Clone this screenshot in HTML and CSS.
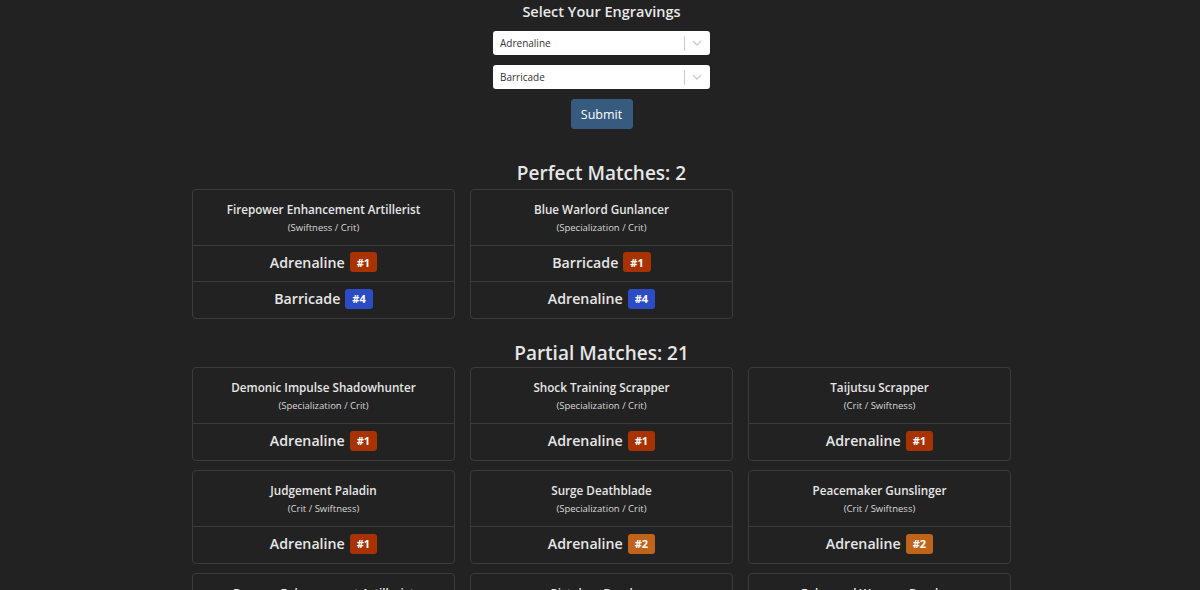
FILE: index.html
```html
<!DOCTYPE html>
<html lang="en">
<head>
<meta charset="utf-8">
<title>Engravings</title>
<link rel="stylesheet" href="styles.css">
</head>
<body>
<div class="page">
  <form class="picker">
    <h1 class="title">Select Your Engravings</h1>
    <div class="select">
      <span class="select-value">Adrenaline</span>
      <span class="select-sep"></span>
      <svg class="select-arrow" width="10" height="6" viewBox="0 0 10 6"><path d="M1 1l4 4 4-4" fill="none" stroke="#ccc" stroke-width="1.3"/></svg>
    </div>
    <div class="select">
      <span class="select-value">Barricade</span>
      <span class="select-sep"></span>
      <svg class="select-arrow" width="10" height="6" viewBox="0 0 10 6"><path d="M1 1l4 4 4-4" fill="none" stroke="#ccc" stroke-width="1.3"/></svg>
    </div>
    <button class="btn" type="button">Submit</button>
  </form>

  <h2 class="section-title first">Perfect Matches: 2</h2>
  <div class="grid">
    <div class="card">
      <div class="card-head"><div class="card-name">Firepower Enhancement Artillerist</div><div class="card-stats">(Swiftness / Crit)</div></div>
      <div class="card-row">Adrenaline <span class="badge b1">#1</span></div>
      <div class="card-row">Barricade <span class="badge b4">#4</span></div>
    </div>
    <div class="card">
      <div class="card-head"><div class="card-name">Blue Warlord Gunlancer</div><div class="card-stats">(Specialization / Crit)</div></div>
      <div class="card-row">Barricade <span class="badge b1">#1</span></div>
      <div class="card-row">Adrenaline <span class="badge b4">#4</span></div>
    </div>
  </div>

  <h2 class="section-title second">Partial Matches: 21</h2>
  <div class="grid partial">
    <div class="card">
      <div class="card-head"><div class="card-name">Demonic Impulse Shadowhunter</div><div class="card-stats">(Specialization / Crit)</div></div>
      <div class="card-row">Adrenaline <span class="badge b1">#1</span></div>
    </div>
    <div class="card">
      <div class="card-head"><div class="card-name">Shock Training Scrapper</div><div class="card-stats">(Specialization / Crit)</div></div>
      <div class="card-row">Adrenaline <span class="badge b1">#1</span></div>
    </div>
    <div class="card">
      <div class="card-head"><div class="card-name">Taijutsu Scrapper</div><div class="card-stats">(Crit / Swiftness)</div></div>
      <div class="card-row">Adrenaline <span class="badge b1">#1</span></div>
    </div>
    <div class="card">
      <div class="card-head"><div class="card-name">Judgement Paladin</div><div class="card-stats">(Crit / Swiftness)</div></div>
      <div class="card-row">Adrenaline <span class="badge b1">#1</span></div>
    </div>
    <div class="card">
      <div class="card-head"><div class="card-name">Surge Deathblade</div><div class="card-stats">(Specialization / Crit)</div></div>
      <div class="card-row">Adrenaline <span class="badge b2">#2</span></div>
    </div>
    <div class="card">
      <div class="card-head"><div class="card-name">Peacemaker Gunslinger</div><div class="card-stats">(Crit / Swiftness)</div></div>
      <div class="card-row">Adrenaline <span class="badge b2">#2</span></div>
    </div>
    <div class="card">
      <div class="card-head"><div class="card-name">Barrage Enhancement Artillerist</div><div class="card-stats">(Crit / Specialization)</div></div>
      <div class="card-row">Adrenaline <span class="badge b2">#2</span></div>
    </div>
    <div class="card">
      <div class="card-head"><div class="card-name">Pistoleer Deadeye</div><div class="card-stats">(Specialization / Crit)</div></div>
      <div class="card-row">Adrenaline <span class="badge b2">#2</span></div>
    </div>
    <div class="card">
      <div class="card-head"><div class="card-name">Enhanced Weapon Deadeye</div><div class="card-stats">(Crit / Specialization)</div></div>
      <div class="card-row">Adrenaline <span class="badge b2">#2</span></div>
    </div>
  </div>
</div>
</body>
</html>
```

FILE: styles.css
```css
* { box-sizing: border-box; }
html, body { margin: 0; padding: 0; background: #222222; }
body {
  font-family: "Open Sans", "Noto Sans", "Liberation Sans", sans-serif;
  color: #e6e6e6;
}
.page {
  padding: 2px 0 40px;
  display: flex;
  flex-direction: column;
  align-items: center;
}
.picker {
  display: flex;
  flex-direction: column;
  align-items: center;
  margin-left: 3px;
}
.title {
  margin: 0;
  font-size: 14.5px;
  line-height: 20px;
  font-weight: 600;
  color: #e8e8e8;
}
.select {
  width: 217px;
  height: 24px;
  background: #fff;
  border-radius: 3px;
  display: flex;
  align-items: center;
  margin-top: 9px;
  padding-left: 7px;
}
.select + .select { margin-top: 10px; }
.select-value {
  flex: 1;
  font-size: 10px;
  color: #333;
}
.select-sep {
  width: 1px;
  height: 15px;
  background: #ccc;
}
.select-arrow {
  margin: 0 8px 0 7px;
}
.btn {
  margin-top: 10px;
  height: 30px;
  width: 62px;
  background: #375a7f;
  border: 1px solid #375a7f;
  border-radius: 3px;
  color: #fff;
  font-family: inherit;
  font-size: 12.5px;
  padding: 0;
}
.section-title {
  font-size: 19px;
  line-height: 24px;
  font-weight: 600;
  color: #e6e6e6;
  margin: 32px 0 4px 3px;
}
.section-title.second { margin-top: 22px; margin-bottom: 2px; }
.grid {
  display: grid;
  grid-template-columns: repeat(3, 263px);
  column-gap: 15px;
  row-gap: 9px;
  margin-left: 3px;
}
.card {
  border: 1px solid #3b3b3b;
  border-radius: 4px;
  background: #222;
}
.card-head {
  padding: 10px 8px 10px;
  text-align: center;
  border-bottom: 1px solid #3b3b3b;
}
.card-name {
  font-size: 11.7px;
  line-height: 18px;
  font-weight: 600;
  color: #e6e6e6;
}
.card-stats {
  margin-top: 3px;
  font-size: 9.5px;
  line-height: 14px;
  color: #d8d8d8;
}
.card-row {
  height: 36px;
  padding-bottom: 3px;
  display: flex;
  align-items: center;
  justify-content: center;
  font-size: 14.2px;
  font-weight: 600;
  color: #e6e6e6;
  border-bottom: 1px solid #3b3b3b;
}
.card-row:last-child { border-bottom: 0; }
.badge {
  display: inline-flex;
  align-items: center;
  justify-content: center;
  margin-left: 5px;
  height: 20px;
  padding: 0 7px;
  border-radius: 3px;
  font-size: 11px;
  font-weight: 700;
  color: #fff;
}
.b1 { background: #a83300; }
.b2 { background: #c0631b; }
.b4 { background: #2b4cc5; }
```
